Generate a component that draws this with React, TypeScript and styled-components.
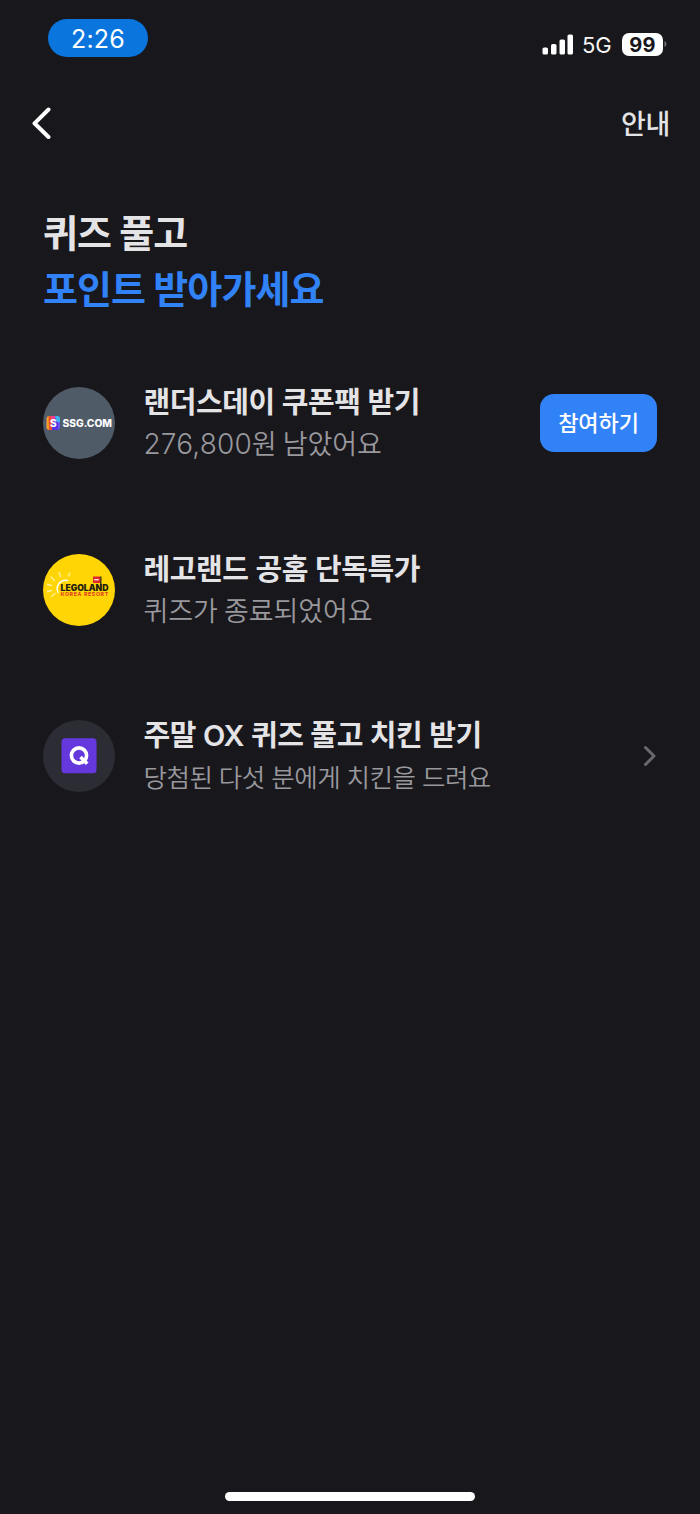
import React from 'react';
import styled, { createGlobalStyle } from 'styled-components';

const GlobalStyle = createGlobalStyle`
  * { box-sizing: border-box; }
  body { margin: 0; background: #18171c; }
`;

const Screen = styled.div`
  width: 700px;
  height: 1514px;
  display: flex;
  flex-direction: column;
  overflow: hidden;
  background: #18171c;
  color: #e4e4e7;
  font-family: Inter, 'Noto Sans CJK KR', sans-serif;
  white-space: nowrap;
`;

const StatusBar = styled.header`
  height: 88px;
  flex: none;
  display: flex;
  align-items: flex-start;
  justify-content: space-between;
  padding: 19px 33px 0 48px;
`;

const TimePill = styled.div`
  width: 100px;
  height: 38px;
  border-radius: 19px;
  background: #0b75de;
  color: #fff;
  font-size: 25px;
  line-height: 40px;
  letter-spacing: 0.2px;
  text-align: center;
`;

const StatusIcons = styled.div`
  display: flex;
  align-items: center;
  height: 24px;
  margin-top: 13px;
`;

const Network = styled.span`
  width: 38px;
  padding: 2px 0 0 8px;
  color: #f5f5f5;
  font-size: 22px;
  line-height: 26px;
`;

const Battery = styled.div`
  width: 41px;
  height: 23px;
  margin-left: 10px;
  border-radius: 7px;
  background: #fff;
  color: #18171c;
  font-size: 20px;
  font-weight: 700;
  line-height: 24px;
  letter-spacing: 0.2px;
  text-align: center;
`;

const NavBar = styled.nav`
  height: 72px;
  flex: none;
  display: flex;
  align-items: center;
  justify-content: space-between;
  padding: 0 30px 0 31px;
`;

const Guide = styled.span`
  padding-top: 2px;
  font-size: 27px;
  font-weight: 500;
  line-height: 40px;
  letter-spacing: -0.3px;
`;

const Heading = styled.h1`
  margin: 45px 0 0 43px;
  font-size: 38px;
  font-weight: 700;
  line-height: 56px;
  letter-spacing: -0.9px;
`;

const Highlight = styled.span`
  display: block;
  color: #3182f6;
`;

const QuizList = styled.ul`
  margin: 23px 0 0;
  padding: 0 43px;
  list-style: none;
`;

const QuizRow = styled.li`
  height: 166.5px;
  display: flex;
  align-items: center;
`;

const Avatar = styled.div<{ $color: string }>`
  width: 72px;
  height: 72px;
  flex: none;
  border-radius: 50%;
  background: ${({ $color }) => $color};
  svg { display: block; }
`;

const QuizText = styled.div`
  flex: 1;
  margin-left: 28.5px;
  padding-top: 2px;
`;

const Title = styled.div`
  font-size: 29px;
  font-weight: 600;
  line-height: 42px;
  letter-spacing: -0.4px;
`;

const Subtitle = styled.div<{ $compact?: boolean }>`
  color: #98989d;
  font-size: ${({ $compact }) => ($compact ? 25.5 : 27)}px;
  font-weight: 350;
  line-height: 42px;
  letter-spacing: ${({ $compact }) => ($compact ? -0.5 : -0.05)}px;
  word-spacing: ${({ $compact }) => ($compact ? -0.2 : -1.5)}px;
`;

const Amount = styled.span`
  font-size: 28px;
  line-height: 1;
  letter-spacing: 0.15px;
`;

const JoinButton = styled.button`
  width: 117px;
  height: 58px;
  padding: 0;
  border: 0;
  border-radius: 14px;
  background: #3182f6;
  color: #fff;
  font: 500 22px/56px Inter, 'Noto Sans CJK KR', sans-serif;
  letter-spacing: -0.1px;
`;

const HomeIndicator = styled.div`
  width: 250px;
  height: 9px;
  margin: auto auto 13.5px;
  border-radius: 5px;
  background: #fff;
`;

const Signal = () => (
  <svg width="32" height="21" viewBox="0 0 32 21" fill="#fff">
    <rect x="0.500" y="13.500" width="5.500" height="7" rx="1.600" />
    <rect x="9" y="10" width="5.500" height="10.500" rx="1.600" />
    <rect x="17.500" y="5.500" width="5.500" height="15" rx="1.600" />
    <rect x="25.500" y="0.500" width="5.500" height="20" rx="1.600" />
  </svg>
);

const BatteryTip = () => (
  <svg width="4" height="8" viewBox="0 0 4 8">
    <path d="M1.500 1v6C4 5.800 4 2.200 1.500 1Z" fill="#77767a" />
  </svg>
);

const BackIcon = () => (
  <svg width="22" height="34" viewBox="0 0 22 34" fill="none" stroke="#fff" strokeWidth="4" strokeLinecap="round" strokeLinejoin="round">
    <path d="M17.500 2.500 3.500 16.300 17.500 30" />
  </svg>
);

const SsgLogo = () => (
  <svg width="72" height="72" viewBox="0 0 72 72">
    <defs>
      <clipPath id="ssgTile"><rect x="3.500" y="29" width="13.500" height="14" rx="3" /></clipPath>
    </defs>
    <g clipPath="url(#ssgTile)">
      <rect x="3" y="29" width="14" height="14" fill="#6754ec" />
      <path d="M3 29h6l-2 14H3Z" fill="#f6a321" />
      <path d="M5.500 29h3v7l2 7H6Z" fill="#ee4b2b" />
      <path d="M8 29h4v4l-3 3Z" fill="#ed3c91" />
      <path d="M12 29h5v6h-3Z" fill="#39b5eb" />
      <path d="M9 38l6-3v8H9Z" fill="#5532e6" />
    </g>
    <text x="10.300" y="39.600" textAnchor="middle" fill="#fff" fontFamily="Inter, sans-serif" fontWeight="800" fontSize="10">S</text>
    <text x="19.500" y="39.800" textLength="49.500" lengthAdjust="spacingAndGlyphs" fill="#fff" fontFamily="Inter, sans-serif" fontWeight="800" fontSize="10.200">SSG.COM</text>
  </svg>
);

const LegoLogo = () => (
  <svg width="72" height="72" viewBox="0 0 72 72">
    <g fill="none" stroke="#fff3a4" strokeWidth="1.300" strokeLinecap="round">
      <path d="M15 38.500a8.500 8.500 0 0 1 9.500-12" stroke="#fff" />
      <path d="M25.500 22l1.500-3M17.500 22.500l-1.500-4M11.500 26.500l-3.500-3.500M8.500 31.500l-4-1M8.500 36.500l-4 1M12 39.500l-3 2.500" />
    </g>
    <rect x="50" y="22.500" width="7" height="6.500" fill="#df292b" />
    <path d="M51.200 25.700h4.600" stroke="#fff" strokeWidth="1.200" />
    <path d="M57.800 22.500v10" stroke="#3e301b" strokeWidth="1.400" />
    <text x="17.500" y="36.700" textLength="48" lengthAdjust="spacingAndGlyphs" fill="#26200e" fontFamily="Inter, sans-serif" fontWeight="900" fontSize="8.300">LEGOLAND</text>
    <text x="17.700" y="42.200" textLength="47.500" lengthAdjust="spacing" fill="#df3c20" fontFamily="Inter, sans-serif" fontWeight="700" fontSize="5.300">KOREA RESORT</text>
  </svg>
);

const QuizLogo = () => (
  <svg width="72" height="72" viewBox="0 0 72 72" fill="none">
    <rect x="18.500" y="18.300" width="35" height="35" rx="3.500" fill="#6438dc" />
    <circle cx="36" cy="35.500" r="7.600" stroke="#fff" strokeWidth="3.600" />
    <path d="m37.500 37 6.700 6.700" stroke="#fff" strokeWidth="3.600" />
  </svg>
);

const ForwardIcon = () => (
  <svg width="14" height="22" viewBox="0 0 14 22" fill="none" stroke="#68686d" strokeWidth="3" strokeLinecap="round" strokeLinejoin="round">
    <path d="m2.500 2.500 8.500 8.500-8.500 8.500" />
  </svg>
);

export default function App() {
  return (
    <Screen>
      <GlobalStyle />
      <StatusBar>
        <TimePill>2:26</TimePill>
        <StatusIcons>
          <Signal />
          <Network>5G</Network>
          <Battery>99</Battery>
          <BatteryTip />
        </StatusIcons>
      </StatusBar>
      <NavBar>
        <BackIcon />
        <Guide>안내</Guide>
      </NavBar>
      <Heading>
        퀴즈 풀고
        <Highlight>포인트 받아가세요</Highlight>
      </Heading>
      <QuizList>
        <QuizRow>
          <Avatar $color="#505b68"><SsgLogo /></Avatar>
          <QuizText>
            <Title>랜더스데이 쿠폰팩 받기</Title>
            <Subtitle><Amount>276,800</Amount>원 남았어요</Subtitle>
          </QuizText>
          <JoinButton>참여하기</JoinButton>
        </QuizRow>
        <QuizRow>
          <Avatar $color="#ffd506"><LegoLogo /></Avatar>
          <QuizText>
            <Title>레고랜드 공홈 단독특가</Title>
            <Subtitle>퀴즈가 종료되었어요</Subtitle>
          </QuizText>
        </QuizRow>
        <QuizRow>
          <Avatar $color="#2c2c34"><QuizLogo /></Avatar>
          <QuizText>
            <Title>주말 OX 퀴즈 풀고 치킨 받기</Title>
            <Subtitle $compact>당첨된 다섯 분에게 치킨을 드려요</Subtitle>
          </QuizText>
          <ForwardIcon />
        </QuizRow>
      </QuizList>
      <HomeIndicator />
    </Screen>
  );
}
